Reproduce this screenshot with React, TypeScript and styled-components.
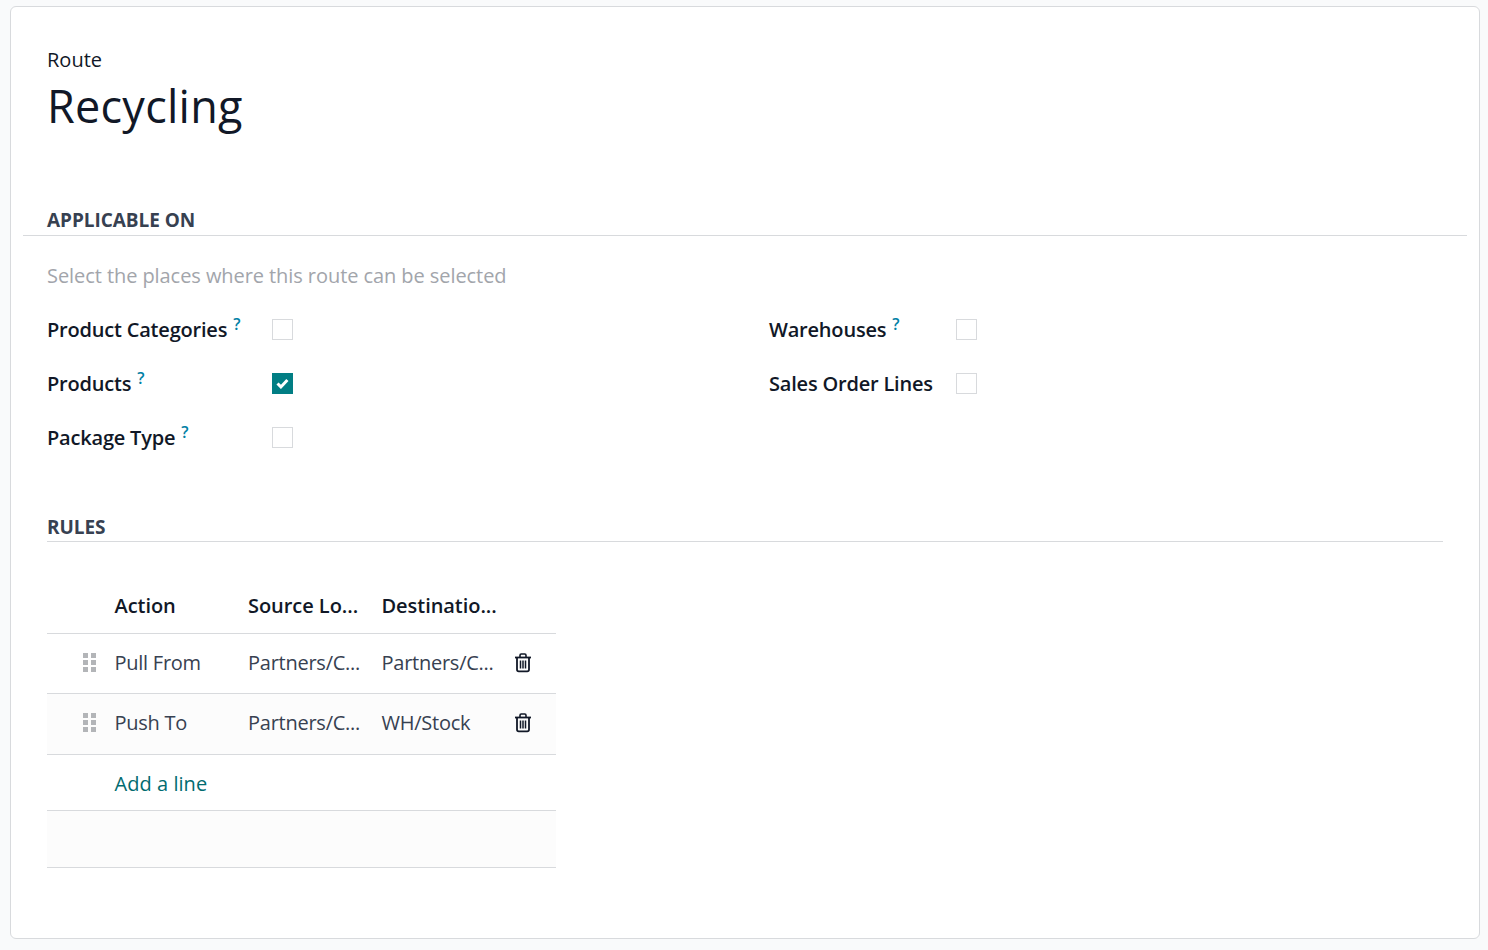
import React from "react";
import styled, { createGlobalStyle } from "styled-components";

const GlobalStyle = createGlobalStyle`
  html, body {
    margin: 0;
    padding: 0;
    background: #f9fafb;
    font-family: "Open Sans", "Noto Sans", sans-serif;
    color: #111827;
  }
`;

const Page = styled.div`
  height: 950px;
  padding: 6px 8px 11px 10px;
  box-sizing: border-box;
  overflow: hidden;
`;

const Sheet = styled.div`
  height: 100%;
  box-sizing: border-box;
  background: #fff;
  border: 1px solid #d8dadd;
  border-radius: 6px;
  padding: 40px 12px 0;
`;

const TitleBlock = styled.div`
  padding-left: 24px;
`;

const TitleLabel = styled.div`
  font-size: 20px;
  line-height: 24px;
  padding-top: 1px;
  font-weight: 500;
`;

const RecordName = styled.h1`
  margin: 0;
  font-size: 45px;
  line-height: 68px;
  font-weight: 400;
  letter-spacing: 0.25px;
`;

const SectionHead = styled.div<{ $inset?: boolean; $top: number }>`
  margin-top: ${({ $top }) => $top}px;
  margin-left: ${({ $inset }) => ($inset ? "24px" : "0")};
  margin-right: ${({ $inset }) => ($inset ? "24px" : "0")};
  padding-left: ${({ $inset }) => ($inset ? "0" : "24px")};
  padding-bottom: ${({ $inset }) => ($inset ? "0" : "1px")};
  border-bottom: 1px solid #d8dadd;
  font-size: 19px;
  line-height: 28px;
  font-weight: 700;
  letter-spacing: -0.05px;
  color: #374151;
`;

const Hint = styled.div`
  margin: 26px 0 0 24px;
  font-size: 20px;
  line-height: 28px;
  letter-spacing: -0.07px;
  color: #a2a5ab;
`;

const OptionsGrid = styled.div`
  margin: 12px 0 0 24px;
  display: grid;
  grid-template-columns: 722px 1fr;
`;

const OptionColumn = styled.div`
  display: flex;
  flex-direction: column;
`;

const OptionRow = styled.div<{ $labelWidth: number }>`
  display: grid;
  grid-template-columns: ${({ $labelWidth }) => $labelWidth}px 21px;
  align-items: center;
  height: 54px;
`;

const OptionLabel = styled.div`
  font-size: 20px;
  font-weight: 600;
  letter-spacing: -0.2px;
  line-height: 28px;
  margin-top: 2px;
  white-space: nowrap;
`;

const HelpMark = styled.sup`
  font-size: 16px;
  font-weight: 600;
  color: #0180a5;
  margin-left: 6px;
  line-height: 0;
  position: relative;
  top: -7px;
  vertical-align: baseline;
`;

const CheckBox = styled.span<{ $checked?: boolean }>`
  width: 21px;
  height: 21px;
  box-sizing: border-box;
  display: flex;
  align-items: center;
  justify-content: center;
  border: 1px solid ${({ $checked }) => ($checked ? "#017e84" : "#d8dadd")};
  background: ${({ $checked }) => ($checked ? "#017e84" : "#fff")};
`;

const RulesTable = styled.div`
  margin: 37px 0 0 24px;
  width: 509px;
`;

const Row = styled.div<{ $height: number; $lift?: number; $shaded?: boolean }>`
  display: grid;
  grid-template-columns: 67.5px 133.5px 133.5px 1fr 50px;
  align-items: center;
  height: ${({ $height }) => $height}px;
  padding-bottom: ${({ $lift }) => $lift ?? 0}px;
  box-sizing: border-box;
  border-bottom: 1px solid #d8dadd;
  background: ${({ $shaded }) => ($shaded ? "#fcfcfc" : "transparent")};
`;

const HeadCell = styled.div`
  font-size: 20px;
  font-weight: 600;
  letter-spacing: -0.05px;
  white-space: nowrap;
`;

const Cell = styled.div`
  font-size: 20px;
  letter-spacing: -0.25px;
  color: #374151;
  white-space: nowrap;
`;

const HandleCell = styled.div`
  display: flex;
  justify-content: flex-end;
  padding-right: 19px;
  margin-bottom: 1px;
`;

const IconCell = styled.div`
  display: flex;
  justify-content: center;
  padding-right: 16px;
`;

const AddLine = styled.a`
  font-size: 20px;
  letter-spacing: 0.05px;
  color: #016b70;
  text-decoration: none;
  margin-top: 2px;
`;

const Handle = () => (
  <svg width="13" height="20" viewBox="0 0 13 20" fill="#b3b5b8">
    {[1, 8, 15].map((y) =>
      [0, 8].map((x) => <rect key={`${x}-${y}`} x={x} y={y} width="5" height="5" />)
    )}
  </svg>
);

const Trash = () => (
  <svg width="18" height="20" viewBox="0 0 18 20" fill="none" stroke="#111827">
    <path d="M1 4.5h16" strokeWidth="1.8" />
    <path d="M6 4V2.2C6 1.5 6.5 1 7.2 1h3.6c.7 0 1.2.5 1.2 1.2V4" strokeWidth="1.6" />
    <path d="M3 5v11.6c0 1 .8 1.8 1.8 1.8h8.4c1 0 1.8-.8 1.8-1.8V5" strokeWidth="1.8" />
    <path d="M6.5 7.5v8M9 7.5v8M11.5 7.5v8" strokeWidth="1.5" />
  </svg>
);

const Check = () => (
  <svg width="13" height="11" viewBox="0 0 13 11" fill="none" stroke="#fff" strokeWidth="3">
    <path d="M1.5 5.5l3.4 3.4 6.5-7" />
  </svg>
);

const leftOptions = [
  { label: "Product Categories", help: true, checked: false },
  { label: "Products", help: true, checked: true },
  { label: "Package Type", help: true, checked: false },
];

const rightOptions = [
  { label: "Warehouses", help: true, checked: false },
  { label: "Sales Order Lines", help: false, checked: false },
];

const rules = [
  { action: "Pull From", source: "Partners/C...", dest: "Partners/C...", height: 60, lift: 2, shaded: false },
  { action: "Push To", source: "Partners/C...", dest: "WH/Stock", height: 61, lift: 3, shaded: true },
];

export default function App() {
  return (
    <Page>
      <GlobalStyle />
      <Sheet>
        <TitleBlock>
          <TitleLabel>Route</TitleLabel>
          <RecordName>Recycling</RecordName>
        </TitleBlock>

        <SectionHead $top={66}>APPLICABLE ON</SectionHead>
        <Hint>Select the places where this route can be selected</Hint>
        <OptionsGrid>
          <OptionColumn>
            {leftOptions.map((o) => (
              <OptionRow key={o.label} $labelWidth={225}>
                <OptionLabel>
                  {o.label}
                  {o.help && <HelpMark>?</HelpMark>}
                </OptionLabel>
                <CheckBox $checked={o.checked}>{o.checked && <Check />}</CheckBox>
              </OptionRow>
            ))}
          </OptionColumn>
          <OptionColumn>
            {rightOptions.map((o) => (
              <OptionRow key={o.label} $labelWidth={187}>
                <OptionLabel>
                  {o.label}
                  {o.help && <HelpMark>?</HelpMark>}
                </OptionLabel>
                <CheckBox $checked={o.checked} />
              </OptionRow>
            ))}
          </OptionColumn>
        </OptionsGrid>

        <SectionHead $top={49} $inset>RULES</SectionHead>
        <RulesTable>
          <Row $height={55} $lift={2}>
            <div />
            <HeadCell>Action</HeadCell>
            <HeadCell>Source Lo...</HeadCell>
            <HeadCell>Destinatio...</HeadCell>
            <div />
          </Row>
          {rules.map((r) => (
            <Row key={r.action} $height={r.height} $lift={r.lift} $shaded={r.shaded}>
              <HandleCell><Handle /></HandleCell>
              <Cell>{r.action}</Cell>
              <Cell>{r.source}</Cell>
              <Cell>{r.dest}</Cell>
              <IconCell><Trash /></IconCell>
            </Row>
          ))}
          <Row $height={56}>
            <div />
            <AddLine href="#">Add a line</AddLine>
          </Row>
          <Row $height={57} $shaded />
        </RulesTable>
      </Sheet>
    </Page>
  );
}
